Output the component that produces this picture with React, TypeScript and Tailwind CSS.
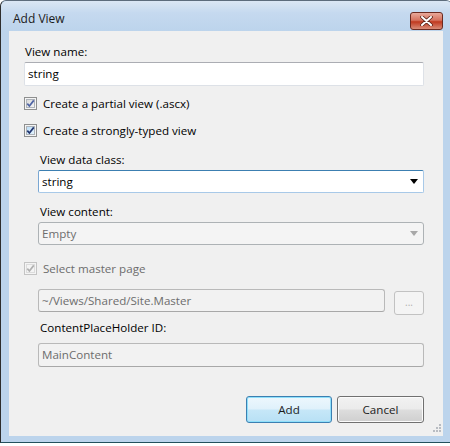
import React from "react";

const font = { fontFamily: '"Open Sans", "Noto Sans", "Liberation Sans", sans-serif' };

function CheckBox({ variant }: { variant: "normal" | "hot" | "disabled" }) {
  const border = variant === "disabled" ? "#c4c4c4" : "#8e8f8f";
  const fillA = variant === "hot" ? "#b9dcf7" : variant === "disabled" ? "#f4f4f4" : "#d8d8d8";
  const fillB = variant === "hot" ? "#e7f4fc" : variant === "disabled" ? "#f4f4f4" : "#f5f5f5";
  const check = variant === "disabled" ? "#b0b0b0" : variant === "hot" ? "#21356f" : "#4f64a4";
  const id = "g" + variant;
  return (
    <svg width="13" height="13" viewBox="0 0 13 13" className="shrink-0">
      <defs>
        <linearGradient id={id} x1="0" y1="0" x2="1" y2="1">
          <stop offset="0" stopColor={fillA} />
          <stop offset="1" stopColor={fillB} />
        </linearGradient>
      </defs>
      <rect x="0.5" y="0.5" width="12" height="12" fill="#f4f4f4" stroke={border} />
      <rect x="2.5" y="2.5" width="8" height="8" fill={`url(#${id})`} stroke={variant === "disabled" ? "#dcdcdc" : "#aeb3b9"} />
      <path d="M3.3 6.6 L5.4 9 L9.8 3.4" fill="none" stroke={check} strokeWidth="1.7" />
    </svg>
  );
}

export default function App() {
  return (
    <div className="w-[450px] h-[446px] overflow-hidden bg-white text-[11.6px] leading-[16px] text-black" style={font}>
      <div className="w-[452px] h-[443px] flex flex-col border-l border-t border-b border-l-[#2e2e2e] border-t-[#5d6c7c] border-b-[#23505d] rounded-t-[6px] bg-[#bcd4ec]">
        {/* title bar */}
        <div className="h-[30px] flex items-center pl-[12px] pr-[9px] bg-[linear-gradient(#dbe7f4,#c5d9ef_40%,#bcd4ec)] rounded-t-[6px]">
          <span className="text-[#1b1b1b] mt-[6px] text-[12px]">Add View</span>
          <div className="ml-auto mt-[9px] w-[33px] h-[18px] rounded-[3px] border border-[#6b2a20] bg-[linear-gradient(#e9a99a,#d6735f_45%,#c0391f_55%,#d98c78)] flex items-center justify-center">
            <svg width="13" height="10" viewBox="0 0 13 10">
              <path d="M2 1 L11 9 M11 1 L2 9" stroke="#5a2418" strokeWidth="3.6" strokeLinecap="round" />
              <path d="M2 1 L11 9 M11 1 L2 9" stroke="#ffffff" strokeWidth="2" strokeLinecap="round" />
            </svg>
          </div>
        </div>
        {/* client area */}
        <div className="ml-[8px] w-[434px] h-[405px] bg-[#f0f0f0] flex flex-col pl-[15px] pr-[19px] relative">
          <div className="mt-[13px] ml-px">View name:</div>
          <div className="mt-[2px] h-[24px] bg-white border border-[#dde1e7] border-t-[#abadb3] rounded-[2px] flex items-center px-[3px]">string</div>

          <div className="mt-[11px] flex items-center gap-[6px] h-[13px]">
            <CheckBox variant="normal" />
            <span>Create a partial view (.ascx)</span>
          </div>
          <div className="mt-[14px] flex items-center gap-[6px] h-[13px]">
            <CheckBox variant="hot" />
            <span>Create a strongly-typed view</span>
          </div>

          <div className="pl-[14px] flex flex-col">
            <div className="mt-[15px] ml-[2px]">View data class:</div>
            <div className="mt-[2px] h-[23px] bg-white border border-[#a8c9e8] border-t-[#3c7fb1] border-l-[#7aa7d3] rounded-[2px] flex items-center px-[3px]">
              <span>string</span>
              <svg className="ml-auto mr-[2px]" width="8" height="5" viewBox="0 0 8 5"><path d="M0 0 H8 L4 5 Z" fill="#000" /></svg>
            </div>
            <div className="mt-[11px] ml-[2px]">View content:</div>
            <div className="mt-[2px] h-[23px] bg-[#f4f4f4] border border-[#adb2b5] rounded-[3px] flex items-center px-[3px] text-[#6d6d6d]">
              <span>Empty</span>
              <svg className="ml-auto mr-[2px]" width="8" height="5" viewBox="0 0 8 5"><path d="M0 0 H8 L4 5 Z" fill="#a8a8a8" /></svg>
            </div>
          </div>

          <div className="mt-[17px] flex items-center gap-[6px] h-[13px] text-[#6d6d6d]">
            <CheckBox variant="disabled" />
            <span>Select master page</span>
          </div>

          <div className="pl-[14px] flex flex-col">
            <div className="mt-[14px] flex items-start gap-[9px]">
              <div className="flex-1 h-[23px] bg-[#f2f2f2] border border-[#b9b9b9] border-b-[#a8a8a8] rounded-[3px] flex items-center px-[3px] text-[#6d6d6d]">~/Views/Shared/Site.Master</div>
              <div className="mt-[2px] w-[30px] h-[24px] border border-[#c2c2c2] rounded-[3px] bg-[#f4f4f4] flex items-end justify-center text-[#b0b0b0] text-[10px] leading-none pb-[7px]">...</div>
            </div>
            <div className="mt-[5px] ml-[2px]">ContentPlaceHolder ID:</div>
            <div className="mt-[7px] h-[24px] bg-[#f2f2f2] border border-[#b9b9b9] border-b-[#a8a8a8] rounded-[3px] flex items-center px-[3px] text-[#6d6d6d]">MainContent</div>
          </div>

          <div className="mt-[29px] flex justify-end gap-[5px]">
            <div className="w-[86px] h-[27px] rounded-[3px] border border-[#3c7fb1] shadow-[inset_0_0_0_1px_#8fe0fb] bg-[linear-gradient(#edf7fd,#dff1fb_48%,#c6e7f8_52%,#b8e0f5)] flex items-center justify-center text-[#1b1b1b]">Add</div>
            <div className="w-[87px] h-[27px] rounded-[3px] border border-[#707070] shadow-[inset_0_0_0_1px_#fbfbfb] bg-[linear-gradient(#f2f2f2,#ebebeb_48%,#dddddd_52%,#cfcfcf)] flex items-center justify-center text-[#1b1b1b]">Cancel</div>
          </div>

          {/* resize grip */}
          <svg className="absolute right-[2px] bottom-[3px]" width="10" height="10" viewBox="0 0 10 10">
            {[[8, 0], [8, 3], [5, 3], [8, 6], [5, 6], [2, 6]].map(([x, y], i) => (
              <rect key={i} x={x} y={y + 1} width="2" height="2" fill="#b8bcc2" />
            ))}
          </svg>
        </div>
      </div>
    </div>
  );
}
